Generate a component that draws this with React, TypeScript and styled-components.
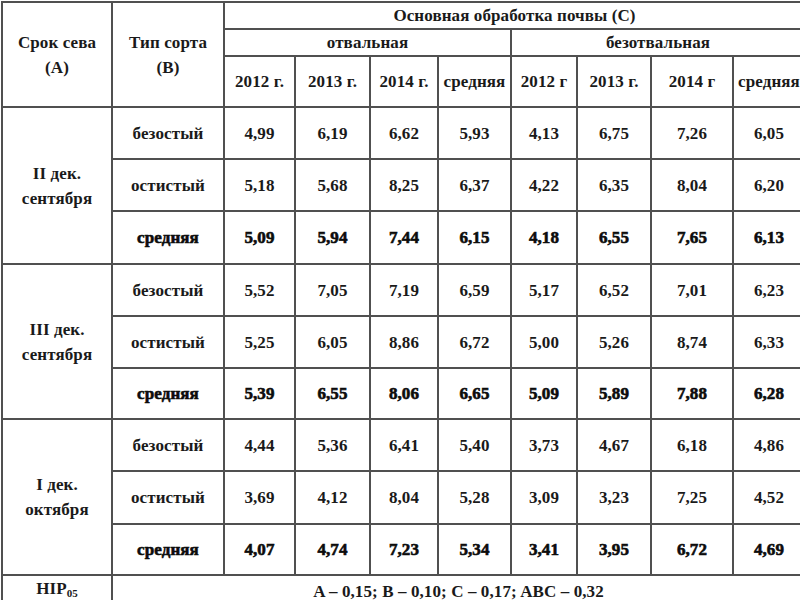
import React from "react";
import styled, { createGlobalStyle } from "styled-components";

const Global = createGlobalStyle`
  html, body { margin: 0; padding: 0; background: #ffffff; overflow: hidden; }
  body { font-family: "Liberation Serif", "Times New Roman", serif; color: #161616; }
`;

const Page = styled.div`
  width: 800px;
  height: 600px;
  overflow: hidden;
  padding-top: 1px;
  padding-left: 1px;
  box-sizing: border-box;
`;

const Table = styled.table`
  border-collapse: collapse;
  table-layout: fixed;
  width: 803px;
  font-family: "Liberation Serif", "Times New Roman", serif;
  font-size: 17px;
  letter-spacing: 0.1px;
`;

const Row = styled.tr<{ $h: number }>`
  height: ${(p) => p.$h}px;
`;

const Cell = styled.td<{ $bold?: boolean }>`
  border: 2px solid #505050;
  padding: 0 2px;
  text-align: center;
  vertical-align: middle;
  line-height: 25px;
  font-weight: 700;
  color: ${(p) => (p.$bold ? "#0c0c0c" : "#1a1a1a")};
  -webkit-text-stroke: ${(p) => (p.$bold ? "0.6px" : "0px")} #0c0c0c;
  white-space: nowrap;
`;

const HeadCell = styled(Cell)`
  line-height: 25px;
`;

const Sub = styled.sub`
  font-size: 11px;
  vertical-align: -3px;
  letter-spacing: 0;
`;

const colWidths = [110, 112, 71, 75, 68, 73, 66, 74, 82, 72];

type Group = {
  label: [string, string];
  rows: { name: string; bold?: boolean; values: string[] }[];
};

const groups: Group[] = [
  {
    label: ["II дек.", "сентября"],
    rows: [
      { name: "безостый", values: ["4,99", "6,19", "6,62", "5,93", "4,13", "6,75", "7,26", "6,05"] },
      { name: "остистый", values: ["5,18", "5,68", "8,25", "6,37", "4,22", "6,35", "8,04", "6,20"] },
      { name: "средняя", bold: true, values: ["5,09", "5,94", "7,44", "6,15", "4,18", "6,55", "7,65", "6,13"] },
    ],
  },
  {
    label: ["III дек.", "сентября"],
    rows: [
      { name: "безостый", values: ["5,52", "7,05", "7,19", "6,59", "5,17", "6,52", "7,01", "6,23"] },
      { name: "остистый", values: ["5,25", "6,05", "8,86", "6,72", "5,00", "5,26", "8,74", "6,33"] },
      { name: "средняя", bold: true, values: ["5,39", "6,55", "8,06", "6,65", "5,09", "5,89", "7,88", "6,28"] },
    ],
  },
  {
    label: ["I дек.", "октября"],
    rows: [
      { name: "безостый", values: ["4,44", "5,36", "6,41", "5,40", "3,73", "4,67", "6,18", "4,86"] },
      { name: "остистый", values: ["3,69", "4,12", "8,04", "5,28", "3,09", "3,23", "7,25", "4,52"] },
      { name: "средняя", bold: true, values: ["4,07", "4,74", "7,23", "5,34", "3,41", "3,95", "6,72", "4,69"] },
    ],
  },
];

const rowHeights = [
  [52, 52, 53],
  [52, 52, 51],
  [52, 53, 51],
];

const years = ["2012 г.", "2013 г.", "2014 г.", "средняя", "2012 г", "2013 г.", "2014 г", "средняя"];

export default function App() {
  return (
    <>
      <Global />
      <Page>
        <Table>
          <colgroup>
            {colWidths.map((w, i) => (
              <col key={i} style={{ width: w }} />
            ))}
          </colgroup>
          <tbody>
            <Row $h={26}>
              <HeadCell rowSpan={3}>
                Срок сева
                <br />
                (А)
              </HeadCell>
              <HeadCell rowSpan={3}>
                Тип сорта
                <br />
                (В)
              </HeadCell>
              <HeadCell colSpan={8}>Основная обработка почвы (С)</HeadCell>
            </Row>
            <Row $h={27}>
              <HeadCell colSpan={4}>отвальная</HeadCell>
              <HeadCell colSpan={4}>безотвальная</HeadCell>
            </Row>
            <Row $h={51}>
              {years.map((y, i) => (
                <HeadCell key={i}>{y}</HeadCell>
              ))}
            </Row>
            {groups.map((g, gi) =>
              g.rows.map((r, ri) => (
                <Row key={`${gi}-${ri}`} $h={rowHeights[gi][ri]}>
                  {ri === 0 && (
                    <Cell rowSpan={3}>
                      {g.label[0]}
                      <br />
                      {g.label[1]}
                    </Cell>
                  )}
                  <Cell $bold={r.bold}>{r.name}</Cell>
                  {r.values.map((v, vi) => (
                    <Cell key={vi} $bold={r.bold}>
                      {v}
                    </Cell>
                  ))}
                </Row>
              ))
            )}
            <Row $h={30}>
              <Cell>
                HIP<Sub>05</Sub>
              </Cell>
              <Cell colSpan={9}>A – 0,15; B – 0,10; C – 0,17; ABC – 0,32</Cell>
            </Row>
          </tbody>
        </Table>
      </Page>
    </>
  );
}
